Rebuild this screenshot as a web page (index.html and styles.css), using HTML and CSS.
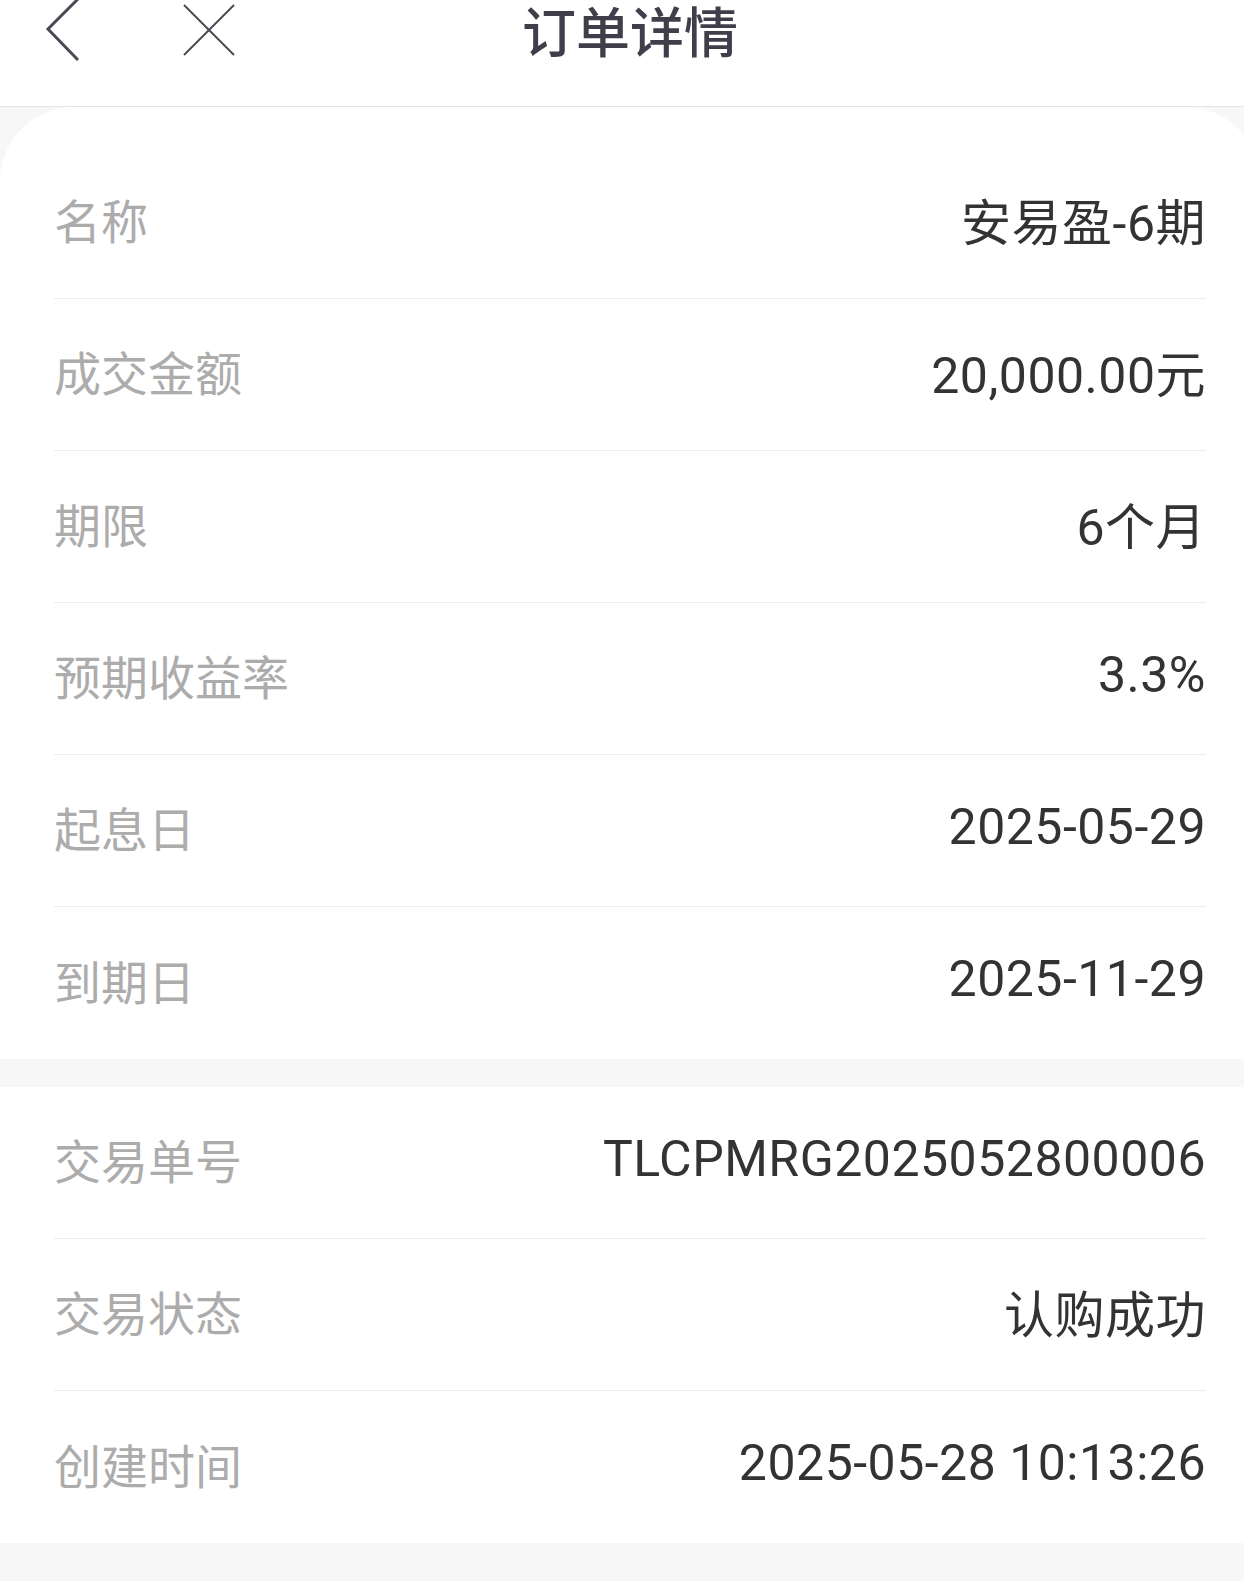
FILE: index.html
```html
<!DOCTYPE html>
<html>
<head>
    <title>订单详情</title>
    <link rel="stylesheet" href="styles.css">
</head>
<body>
    <div class="page">
        <div class="header">
            <div class="nav-left">
                <svg class="icon-back" width="40" height="64" viewBox="0 0 40 64">
                    <polyline points="34,1 4,31 34,62" fill="none" stroke="#4a4a55" stroke-width="3" stroke-linejoin="miter"/>
                </svg>
                <svg class="icon-close" width="54" height="54" viewBox="0 0 54 54">
                    <line x1="2" y1="2" x2="52" y2="52" stroke="#4a4a55" stroke-width="2"/>
                    <line x1="52" y1="2" x2="2" y2="52" stroke="#4a4a55" stroke-width="2"/>
                </svg>
            </div>
            <h1>订单详情</h1>
            <div></div>
        </div>

        <div class="card card-top">
            <div class="row"><span class="label">名称</span><span class="value">安易盈-6期</span></div>
            <div class="row"><span class="label">成交金额</span><span class="value">20,000.00元</span></div>
            <div class="row"><span class="label">期限</span><span class="value">6个月</span></div>
            <div class="row"><span class="label">预期收益率</span><span class="value">3.3%</span></div>
            <div class="row"><span class="label">起息日</span><span class="value">2025-05-29</span></div>
            <div class="row"><span class="label">到期日</span><span class="value">2025-11-29</span></div>
        </div>

        <div class="card">
            <div class="row"><span class="label">交易单号</span><span class="value">TLCPMRG2025052800006</span></div>
            <div class="row"><span class="label">交易状态</span><span class="value">认购成功</span></div>
            <div class="row"><span class="label">创建时间</span><span class="value">2025-05-28 10:13:26</span></div>
        </div>
    </div>
</body>
</html>
```

FILE: styles.css
```css
body {
    margin: 0;
    padding: 0;
    background-color: #f7f7f7;
    font-family: "Noto Sans CJK SC", "Noto Sans", sans-serif;
    overflow: hidden;
}

.page {
    width: 1260px;
}

.header {
    display: grid;
    grid-template-columns: 1fr auto 1fr;
    height: 106px;
    background-color: #fff;
    border-bottom: 1px solid #e4e4e4;
}

.nav-left {
    display: flex;
    align-items: flex-start;
    padding-left: 44px;
}

.icon-back {
    display: block;
    margin-top: -2px;
}

.icon-close {
    display: block;
    margin-top: 3px;
    margin-left: 98px;
}

.header h1 {
    margin: 0;
    font-size: 54px;
    font-weight: 500;
    line-height: 60px;
    color: #3f3f4b;
}

.card {
    background-color: #fff;
    padding: 0 54px;
    margin-bottom: 28px;
}

.card-top {
    padding-top: 40px;
    border-radius: 74px 74px 0 0;
}

.row {
    display: flex;
    justify-content: space-between;
    align-items: center;
    height: 152px;
    box-sizing: border-box;
    padding-bottom: 8px;
    border-bottom: 1px solid #ececec;
}

.row:last-child {
    border-bottom: none;
}

.label {
    font-size: 47px;
    color: #acacac;
}

.value {
    font-family: Roboto, "Noto Sans CJK SC", sans-serif;
    font-size: 50px;
    letter-spacing: 0.5px;
    color: #333;
}
```
